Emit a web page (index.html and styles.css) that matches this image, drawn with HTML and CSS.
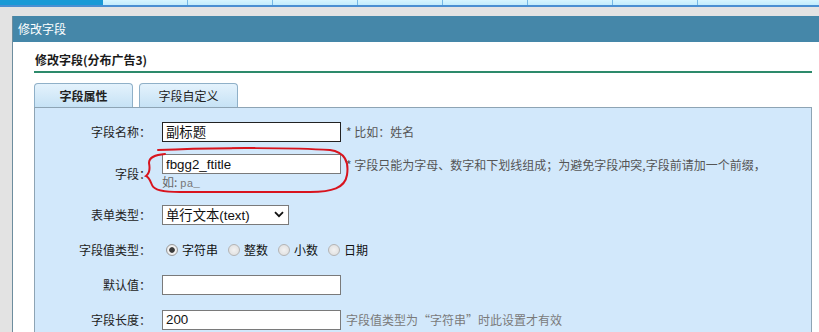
FILE: index.html
```html
<!DOCTYPE html>
<html lang="zh-CN">
<head>
<meta charset="utf-8">
<title>修改字段</title>
<link rel="stylesheet" href="styles.css">
</head>
<body>
<div class="topnav">
  <div class="nav-home"></div>
  <div class="nav-tab"></div><div class="nav-tab"></div><div class="nav-tab"></div><div class="nav-tab"></div>
  <div class="nav-tab"></div><div class="nav-tab"></div><div class="nav-tab"></div><div class="nav-tab nav-last"></div>
</div>
<div class="panel">
  <div class="panel-head">修改字段</div>
  <div class="panel-body">
    <div class="subtitle">修改字段(分布广告3)</div>
    <div class="tabs">
      <div class="tab active">字段属性</div>
      <div class="tab">字段自定义</div>
    </div>
    <div class="content">
      <div class="row">
        <div class="label">字段名称：</div>
        <div class="value">
          <input class="txt txt-dark" type="text" value="副标题">
          <span class="hint">* 比如：姓名</span>
        </div>
      </div>
      <div class="row row-tall">
        <div class="label">字段：</div>
        <div class="value value-stack">
          <div class="line">
            <input class="txt" type="text" value="fbgg2_ftitle">
            <span class="hint">* 字段只能为字母、数字和下划线组成；为避免字段冲突,字段前请加一个前缀，</span>
          </div>
          <div class="line2">如: <code class="mono">pa_</code></div>
        </div>
      </div>
      <div class="row">
        <div class="label">表单类型：</div>
        <div class="value">
          <div class="select"><span>单行文本(text)</span>
            <svg class="chev" width="10" height="7" viewBox="0 0 10 7"><path d="M1 1.2 L5 5.2 L9 1.2" fill="none" stroke="#111" stroke-width="1.8"/></svg>
          </div>
        </div>
      </div>
      <div class="row">
        <div class="label">字段值类型：</div>
        <div class="value radios">
          <span class="radio checked"></span><span class="rlabel">字符串</span>
          <span class="radio"></span><span class="rlabel">整数</span>
          <span class="radio"></span><span class="rlabel">小数</span>
          <span class="radio"></span><span class="rlabel">日期</span>
        </div>
      </div>
      <div class="row">
        <div class="label">默认值：</div>
        <div class="value">
          <input class="txt" type="text" value="">
        </div>
      </div>
      <div class="row">
        <div class="label">字段长度：</div>
        <div class="value">
          <input class="txt" type="text" value="200">
          <span class="hint light">字段值类型为“字符串”时此设置才有效</span>
        </div>
      </div>
    </div>
  </div>
</div>
<svg class="annot" width="819" height="332" viewBox="0 0 819 332">
  <path d="M158 150 C220 147 300 148 330 150 C345 152 349 162 347 175 C345 188 332 192 310 192 L180 192 C162 192 154 190 152 185 C150 180 149 177 146 176 C150 173 150 168 149 163 C149 157 155 155 165 154" fill="none" stroke="#d8141e" stroke-width="2" stroke-linecap="round"/>
</svg>
</body>
</html>
```
FILE: styles.css
```css
html, body {
  margin: 0;
  padding: 0;
}
body {
  background: #e3e3e3;
  font-family: "Noto Sans CJK SC", "Liberation Sans", sans-serif;
  font-size: 12px;
  color: #222;
  overflow: hidden;
  width: 819px;
  height: 332px;
  position: relative;
}
.topnav {
  display: flex;
  height: 5px;
  border-bottom: 2px solid #4a8fd2;
  overflow: hidden;
}
.nav-home {
  width: 103px;
  flex: none;
  background: #1a9ad6;
}
.nav-tab {
  width: 84px;
  flex: none;
  background: linear-gradient(#d6f5ff, #c2ecfd);
  border-right: 1px solid #74b8e6;
}
.nav-last {
  flex: 1;
  border-right: none;
}
.panel {
  margin: 9px 0 0 12px;
  width: 806px;
  border-left: 1px solid #6d8d9e;
}
.panel-head {
  height: 26px;
  line-height: 26px;
  background: #4587a9;
  color: #fff;
  padding-left: 5px;
  font-size: 12px;
}
.panel-body {
  background: #fff;
  padding-left: 21px;
  height: 290px;
  overflow: hidden;
}
.subtitle {
  width: 778px;
  box-sizing: border-box;
  padding: 8px 0 1px 1px;
  line-height: 20px;
  font-weight: bold;
  color: #1a1a1a;
  border-bottom: 2px solid #2d8a6b;
}
.tabs {
  display: flex;
  gap: 6px;
  margin-top: 10px;
}
.tab {
  width: 99px;
  height: 24px;
  box-sizing: border-box;
  border: 1px solid #8fb0c8;
  border-bottom: none;
  border-radius: 4px 4px 0 0;
  background: linear-gradient(#e4f2fc, #c6e2f5);
  text-align: center;
  line-height: 23px;
  color: #222;
}
.tab.active {
  font-weight: bold;
}
.content {
  width: 778px;
  box-sizing: border-box;
  border: 1px solid #8ea4b4;
  border-bottom: none;
  background: #d2e8fb;
  padding-top: 6px;
  height: 225px;
  overflow: hidden;
}
.row {
  display: flex;
  align-items: center;
  height: 35px;
}
.row-tall {
  height: 48px;
}
.label {
  width: 116px;
  flex: none;
  text-align: right;
  color: #222;
}
.value {
  margin-left: 11px;
  display: flex;
  align-items: center;
}
.value-stack {
  flex-direction: column;
  align-items: flex-start;
  align-self: flex-start;
  margin-top: 5px;
}
.line {
  display: flex;
  align-items: center;
  height: 20px;
}
.line2 {
  line-height: 16px;
  color: #666;
}
.mono {
  font-family: "Liberation Mono", monospace;
  font-size: 11px;
  color: #777;
}
.txt {
  width: 179px;
  height: 20px;
  box-sizing: border-box;
  margin: 0;
  border: 1px solid #7a7a7a;
  padding: 0 3px;
  background: #fff;
  font-family: "Liberation Sans", "Noto Sans CJK SC", sans-serif;
  font-size: 13.33px;
  color: #111;
  outline: none;
}
.txt-dark {
  border-color: #222;
}
.hint {
  margin-left: 5px;
  color: #555;
  white-space: nowrap;
}
.hint.light {
  color: #7a7a7a;
}
.select {
  width: 127px;
  height: 20px;
  box-sizing: border-box;
  border: 1px solid #7a7a7a;
  background: #fff;
  padding: 0 4px 0 3px;
  display: flex;
  align-items: center;
  justify-content: space-between;
  font-family: "Liberation Sans", "Noto Sans CJK SC", sans-serif;
  font-size: 13.33px;
  color: #111;
}
.chev {
  display: block;
}
.radios {
  color: #111;
}
.radio {
  width: 12px;
  height: 12px;
  box-sizing: border-box;
  border-radius: 50%;
  border: 1px solid #b4b4b4;
  background: radial-gradient(circle at 50% 50%, #f2f2f2 0, #dcdcdc 100%);
  margin-left: 10px;
  flex: none;
}
.radio:first-child {
  margin-left: 4px;
}
.radio.checked {
  background: radial-gradient(circle at 50% 50%, #3a3a3a 0 2.4px, #f4f4f4 3.2px, #d8d8d8 100%);
  border-color: #9a9a9a;
}
.rlabel {
  margin-left: 4px;
}
.annot {
  position: absolute;
  left: 0;
  top: 0;
  pointer-events: none;
}
```
